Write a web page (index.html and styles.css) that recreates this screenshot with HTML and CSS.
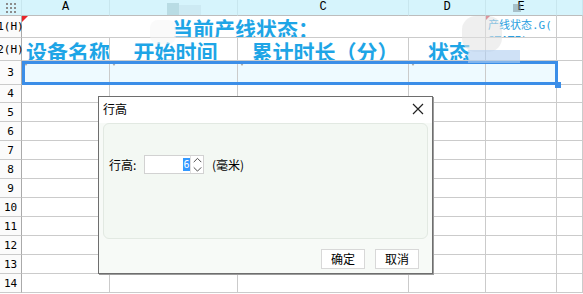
FILE: index.html
```html
<!DOCTYPE html>
<html lang="zh">
<head>
<meta charset="utf-8">
<title>行高</title>
<link rel="stylesheet" href="styles.css">
</head>
<body>
<div class="sheet">
  <div class="cell corner">
    <svg width="10" height="10" viewBox="0 0 10 10"><g fill="#8c8c8c"><rect x="0" y="0" width="2" height="2"/><rect x="4" y="0" width="2" height="2"/><rect x="8" y="0" width="2" height="2"/><rect x="0" y="4" width="2" height="2"/><rect x="4" y="4" width="2" height="2"/><rect x="8" y="4" width="2" height="2"/><rect x="0" y="8" width="2" height="2"/><rect x="4" y="8" width="2" height="2"/><rect x="8" y="8" width="2" height="2"/></g></svg>
  </div>
  <div class="cell colh">A</div>
  <div class="cell colh"></div>
  <div class="cell colh">C</div>
  <div class="cell colh">D</div>
  <div class="cell colh">E</div>
  <div class="cell colh"></div>

  <div class="cell rowh">1(H)</div>
  <div class="cell merged title"><span class="mark-red"></span>当前产线状态：</div>
  <div class="cell e1"><span class="mark-pink"></span>产线状态.G(STATE)</div>
  <div class="cell"></div>

  <div class="cell rowh">2(H)</div>
  <div class="cell head">设备名称</div>
  <div class="cell head">开始时间</div>
  <div class="cell head">累计时长（分）</div>
  <div class="cell head">状态</div>
  <div class="cell"></div>
  <div class="cell"></div>

  <div class="cell rowh">3</div>
  <div class="cell sel tri"></div>
  <div class="cell sel tri"></div>
  <div class="cell sel tri"></div>
  <div class="cell sel tri"></div>
  <div class="cell sel"></div>
  <div class="cell"></div>

  <div class="cell rowh">4</div><div class="cell"></div><div class="cell"></div><div class="cell"></div><div class="cell"></div><div class="cell"></div><div class="cell"></div>
  <div class="cell rowh">5</div><div class="cell"></div><div class="cell"></div><div class="cell"></div><div class="cell"></div><div class="cell"></div><div class="cell"></div>
  <div class="cell rowh">6</div><div class="cell"></div><div class="cell"></div><div class="cell"></div><div class="cell"></div><div class="cell"></div><div class="cell"></div>
  <div class="cell rowh">7</div><div class="cell"></div><div class="cell"></div><div class="cell"></div><div class="cell"></div><div class="cell"></div><div class="cell"></div>
  <div class="cell rowh">8</div><div class="cell"></div><div class="cell"></div><div class="cell"></div><div class="cell"></div><div class="cell"></div><div class="cell"></div>
  <div class="cell rowh">9</div><div class="cell"></div><div class="cell"></div><div class="cell"></div><div class="cell"></div><div class="cell"></div><div class="cell"></div>
  <div class="cell rowh">10</div><div class="cell"></div><div class="cell"></div><div class="cell"></div><div class="cell"></div><div class="cell"></div><div class="cell"></div>
  <div class="cell rowh">11</div><div class="cell"></div><div class="cell"></div><div class="cell"></div><div class="cell"></div><div class="cell"></div><div class="cell"></div>
  <div class="cell rowh">12</div><div class="cell"></div><div class="cell"></div><div class="cell"></div><div class="cell"></div><div class="cell"></div><div class="cell"></div>
  <div class="cell rowh">13</div><div class="cell"></div><div class="cell"></div><div class="cell"></div><div class="cell"></div><div class="cell"></div><div class="cell"></div>
  <div class="cell rowh">14</div><div class="cell"></div><div class="cell"></div><div class="cell"></div><div class="cell"></div><div class="cell"></div><div class="cell"></div>
</div>

<div class="selection"><span class="handle"></span></div>

<div class="wm wm1"></div>
<div class="wm wm2"></div>
<div class="wm wm3"></div>
<div class="wm wm4"></div>
<div class="wm wm5"></div>
<div class="wm wm6"></div>

<div class="dialog">
  <div class="dlg-title">
    <span>行高</span>
    <svg class="close" width="12" height="12" viewBox="0 0 12 12"><path d="M1 1 L11 11 M11 1 L1 11" stroke="#222" stroke-width="1.2" fill="none"/></svg>
  </div>
  <div class="dlg-body">
    <div class="panel">
      <div class="field">
        <span class="lbl">行高:</span>
        <div class="spin">
          <div class="spin-input"><span class="val">6</span></div>
          <div class="spin-btns">
            <svg width="11" height="9" viewBox="0 0 11 9"><path d="M1.5 6.5 L5.5 2.5 L9.5 6.5" stroke="#444" stroke-width="1" fill="none"/></svg>
            <svg width="11" height="9" viewBox="0 0 11 9"><path d="M1.5 2.5 L5.5 6.5 L9.5 2.5" stroke="#444" stroke-width="1" fill="none"/></svg>
          </div>
        </div>
        <span class="unit">(毫米)</span>
      </div>
    </div>
    <div class="dlg-buttons">
      <button class="btn">确定</button>
      <button class="btn">取消</button>
    </div>
  </div>
</div>
</body>
</html>
```

FILE: styles.css
```css
html, body {
  margin: 0;
  padding: 0;
}
body {
  width: 583px;
  height: 294px;
  overflow: hidden;
  position: relative;
  background: #ffffff;
  font-family: "Noto Sans CJK SC", "Liberation Sans", sans-serif;
  font-size: 12px;
  color: #000;
}
.sheet {
  display: grid;
  grid-template-columns: 22px 88px 128px 171px 77px 71px 26px;
  grid-template-rows: 16px 22px 23px 24px 18px repeat(10, 19px);
}
.cell {
  box-sizing: border-box;
  border-right: 1px solid #cbcbcb;
  border-bottom: 1px solid #cbcbcb;
  overflow: hidden;
  position: relative;
  white-space: nowrap;
}
.corner {
  background: #d6f4fc;
  border-bottom-color: #bdbdbd;
  border-right-color: #c8e6ee;
  display: flex;
  align-items: center;
  justify-content: center;
}
.colh {
  background: #d6f4fc;
  border-bottom-color: #bdbdbd;
  border-right-color: #c8e6ee;
  font-family: "Liberation Mono", "DejaVu Sans Mono", monospace;
  font-size: 12px;
  line-height: 15px;
  text-align: center;
  color: #000;
}
.rowh {
  background: #fbfbfb;
  border-right-color: #aaaaaa;
  font-family: "DejaVu Sans Mono", "Liberation Mono", monospace;
  font-size: 11px;
  text-align: center;
  display: flex;
  align-items: center;
  justify-content: center;
  overflow: visible;
  color: #000;
}
.merged {
  grid-column: span 4;
}
.title, .head {
  color: #1ea5e6;
  font-weight: 700;
  font-size: 21px;
  line-height: 21px;
}
.title {
  padding-left: 150px;
  padding-top: 2px;
  box-sizing: border-box;
}
.head {
  text-align: center;
  padding-top: 3px;
  padding-left: 4px;
}
.e1 {
  color: #2a9fe0;
  font-family: "DejaVu Sans Mono", "Noto Sans CJK SC", monospace;
  font-size: 11px;
  line-height: 15px;
  white-space: normal;
  word-break: break-all;
  line-break: anywhere;
  padding: 2px 0 0 2px;
}
.mark-red {
  position: absolute;
  left: 0;
  top: 0;
  width: 0;
  height: 0;
  border-top: 6px solid #e8252b;
  border-right: 6px solid transparent;
}
.mark-pink {
  position: absolute;
  left: 0;
  top: 0;
  width: 0;
  height: 0;
  border-top: 4px solid #d2374a;
  border-right: 4px solid transparent;
}
.sel {
  background: #eefaff;
}
.tri::before {
  content: "";
  position: absolute;
  left: 2px;
  top: 2px;
  width: 0;
  height: 0;
  border-top: 3px solid #a8a8a8;
  border-left: 2px solid transparent;
  border-right: 2px solid transparent;
}
.selection {
  position: absolute;
  left: 22px;
  top: 61px;
  width: 536px;
  height: 24px;
  box-sizing: border-box;
  border: 3px solid #3b8ee8;
}
.handle {
  position: absolute;
  right: -6px;
  bottom: -6px;
  width: 6px;
  height: 6px;
  background: #3b8ee8;
}
.wm {
  position: absolute;
}
.wm1 { left: 167px; top: 3px; width: 12px; height: 12px; background: rgba(150, 190, 200, 0.45); }
.wm2 { left: 179px; top: 5px; width: 22px; height: 10px; background: rgba(190, 215, 225, 0.35); }
.wm3 { left: 150px; top: 20px; width: 26px; height: 24px; background: rgba(245, 245, 245, 0.5); border-radius: 8px; }
.wm4 { left: 462px; top: 16px; width: 40px; height: 36px; background: rgba(225, 225, 225, 0.55); border-radius: 14px; }
.wm5 { left: 468px; top: 50px; width: 52px; height: 13px; background: rgba(175, 205, 240, 0.6); }
.wm6 { left: 513px; top: 4px; width: 8px; height: 8px; background: rgba(120, 140, 150, 0.5); }

.dialog {
  position: absolute;
  left: 98px;
  top: 96px;
  width: 335px;
  height: 178px;
  box-sizing: border-box;
  border: 1px solid #6e6e6e;
  box-shadow: 1px 1px 0 #9c9c9c;
  background: #f7faf7;
  display: flex;
  flex-direction: column;
}
.dlg-title {
  height: 26px;
  background: #ffffff;
  display: flex;
  align-items: flex-start;
  justify-content: space-between;
  padding: 4px 8px 0 4px;
  box-sizing: border-box;
  font-size: 12px;
  line-height: 16px;
}
.close {
  margin-top: 2px;
}
.dlg-body {
  display: flex;
  flex-direction: column;
  padding: 0 4px;
}
.panel {
  height: 116px;
  box-sizing: border-box;
  background: #f3f8f3;
  border: 1px solid #e2e9e2;
  border-radius: 6px;
  padding: 31px 0 0 5px;
}
.field {
  display: flex;
  align-items: center;
  height: 19px;
}
.lbl {
  width: 35px;
}
.spin {
  display: flex;
  height: 19px;
  box-sizing: border-box;
  border: 1px solid #d2d2d2;
  background: #ffffff;
}
.spin-input {
  width: 45px;
  display: flex;
  justify-content: flex-end;
  align-items: center;
  border-right: 1px solid #e0e0e0;
}
.val {
  background: #3399ff;
  color: #ffffff;
  width: 7px;
  height: 13px;
  line-height: 13px;
  font-family: "DejaVu Sans Mono", monospace;
  font-size: 10px;
  text-align: center;
}
.spin-btns {
  width: 12px;
  display: flex;
  flex-direction: column;
  align-items: center;
  justify-content: space-between;
}
.unit {
  margin-left: 8px;
}
.dlg-buttons {
  display: flex;
  justify-content: flex-end;
  gap: 10px;
  margin-top: 10px;
  padding-right: 9px;
}
.btn {
  width: 44px;
  height: 20px;
  box-sizing: border-box;
  border: 1px solid #d8d8d8;
  background: #ffffff;
  font-family: "Noto Sans CJK SC", sans-serif;
  font-size: 12px;
  line-height: 16px;
  padding: 0;
  color: #000;
}
```
